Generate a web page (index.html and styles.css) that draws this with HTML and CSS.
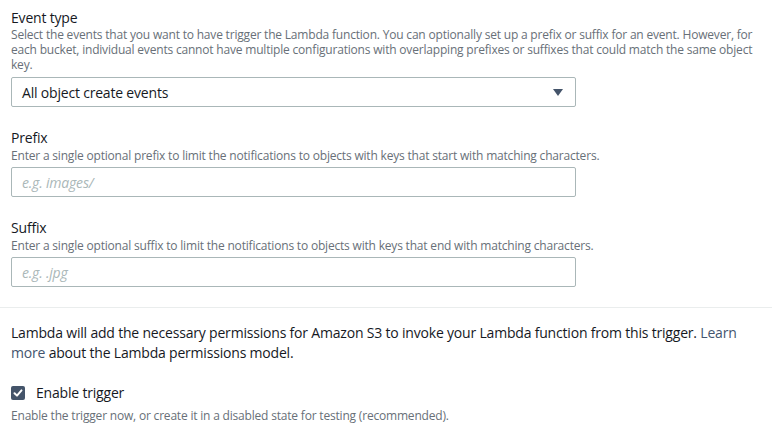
FILE: index.html
```html
<!DOCTYPE html>
<html lang="en">
<head>
<meta charset="utf-8">
<title>Trigger configuration</title>
<link rel="stylesheet" href="styles.css">
</head>
<body>
<div class="form">
  <div class="field field-first">
    <div class="label">Event type</div>
    <div class="desc">Select the events that you want to have trigger the Lambda function. You can optionally set up a prefix or suffix for an event. However, for each bucket, individual events cannot have multiple configurations with overlapping prefixes or suffixes that could match the same object key.</div>
    <div class="select">
      <span>All object create events</span>
      <svg class="caret" width="10" height="7" viewBox="0 0 10 7"><polygon points="0,0 10,0 5,7" fill="#44546a"/></svg>
    </div>
  </div>
  <div class="field">
    <div class="label">Prefix</div>
    <div class="desc">Enter a single optional prefix to limit the notifications to objects with keys that start with matching characters.</div>
    <div class="input"><span class="placeholder">e.g. images/</span></div>
  </div>
  <div class="field">
    <div class="label">Suffix</div>
    <div class="desc">Enter a single optional suffix to limit the notifications to objects with keys that end with matching characters.</div>
    <div class="input"><span class="placeholder">e.g. .jpg</span></div>
  </div>
</div>
<hr class="divider">
<div class="form">
  <p class="info">Lambda will add the necessary permissions for Amazon S3 to invoke your Lambda function from this trigger. <a class="link" href="#">Learn more</a> about the Lambda permissions model.</p>
  <div class="check-row">
    <span class="checkbox">
      <svg width="14" height="14" viewBox="0 0 14 14"><polyline points="3.5,7.2 6,9.6 10.5,4.4" fill="none" stroke="#fff" stroke-width="2" stroke-linecap="round" stroke-linejoin="round"/></svg>
    </span>
    <span class="check-label">Enable trigger</span>
  </div>
  <div class="desc check-desc">Enable the trigger now, or create it in a disabled state for testing (recommended).</div>
</div>
</body>
</html>
```
FILE: styles.css
```css
html, body {
  margin: 0;
  padding: 0;
  background: #ffffff;
}
body {
  font-family: "Open Sans", "Noto Sans", sans-serif;
  color: #16191f;
  letter-spacing: -0.012em;
}
.form {
  padding: 0 11px;
}
.field {
  margin-top: 21px;
}
.field-first {
  margin-top: 9px;
}
.label {
  font-size: 14px;
  line-height: 20px;
  color: #16191f;
}
.field-first .label {
  line-height: 18px;
}
.desc {
  font-size: 12px;
  line-height: 15px;
  color: #687078;
}
.select, .input {
  box-sizing: border-box;
  width: 565px;
  height: 30px;
  margin-top: 4px;
  border: 1px solid #aab7b8;
  border-radius: 2px;
  display: flex;
  align-items: center;
  padding: 0 12px 0 10px;
  font-size: 14px;
}
.field-first .select {
  margin-top: 5px;
}
.select {
  justify-content: space-between;
  color: #16191f;
}
.caret {
  display: block;
}
.placeholder {
  font-style: italic;
  color: #aab7b8;
}
.divider {
  margin: 20px 0 0;
  border: 0;
  height: 1px;
  background: #eaeded;
}
.info {
  margin: 15px 0 0;
  font-size: 14px;
  line-height: 20px;
  color: #16191f;
}
.link {
  color: #44556e;
  text-decoration: none;
}
.check-row {
  margin-top: 20px;
  display: flex;
  align-items: center;
  height: 20px;
  gap: 11px;
}
.checkbox {
  width: 14px;
  height: 14px;
  border-radius: 2px;
  background: #44546a;
  display: flex;
}
.check-label {
  font-size: 14px;
  line-height: 20px;
}
.check-desc {
  margin-top: 5px;
}
```
